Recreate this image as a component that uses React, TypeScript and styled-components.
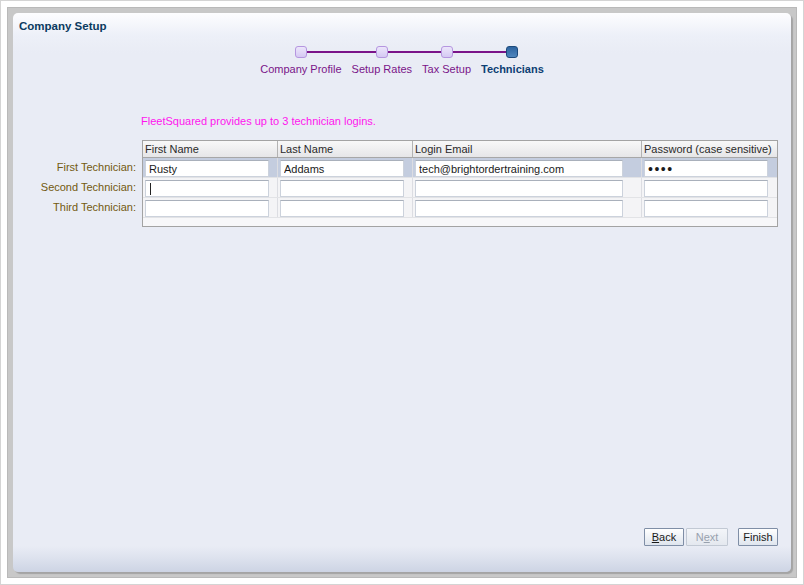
import styled, { createGlobalStyle, css } from "styled-components";

const GlobalStyle = createGlobalStyle`
  html, body {
    margin: 0;
    padding: 0;
    background: #ffffff;
  }
  body {
    font-family: "Liberation Sans", Arial, sans-serif;
    font-size: 11px;
  }
`;

const steps = [
  { label: "Company Profile", done: true },
  { label: "Setup Rates", done: true },
  { label: "Tax Setup", done: true },
  { label: "Technicians", current: true },
];

const columns = [
  { title: "First Name", width: 135, input: 124 },
  { title: "Last Name", width: 135, input: 124 },
  { title: "Login Email", width: 229, input: 208 },
  { title: "Password (case sensitive)", width: 135, input: 124 },
];

const rows = [
  { label: "First Technician:", values: ["Rusty", "Addams", "tech@brightordertraining.com", "••••"], selected: true },
  { label: "Second Technician:", values: ["", "", "", ""], caret: true },
  { label: "Third Technician:", values: ["", "", "", ""] },
];

export default function App() {
  return (
    <>
      <GlobalStyle />
      <Frame>
        <Backdrop>
          <Panel>
            <Title>Company Setup</Title>

            <Train>
              {steps.map((step, i) => (
                <Step key={step.label} first={i === 0} last={i === steps.length - 1}>
                  <Marker current={!!step.current} />
                  <StepLabel current={!!step.current}>{step.label}</StepLabel>
                </Step>
              ))}
            </Train>

            <Content>
              <Message>FleetSquared provides up to 3 technician logins.</Message>
              <FormRow>
                <Labels>
                  {rows.map((row) => (
                    <RowLabel key={row.label}>{row.label}</RowLabel>
                  ))}
                </Labels>
                <Table>
                  <HeaderRow>
                    {columns.map((col) => (
                      <HeaderCell key={col.title} style={{ width: col.width }}>
                        {col.title}
                      </HeaderCell>
                    ))}
                  </HeaderRow>
                  {rows.map((row) => (
                    <BodyRow key={row.label} selected={!!row.selected}>
                      {columns.map((col, c) => (
                        <Cell key={col.title} style={{ width: col.width }}>
                          <Field
                            style={{ width: col.input }}
                            defaultValue={row.values[c]}
                            dots={c === 3}
                            readOnly
                          />
                          {row.caret && c === 0 && <Caret />}
                        </Cell>
                      ))}
                    </BodyRow>
                  ))}
                  <TableFoot />
                </Table>
              </FormRow>
            </Content>

            <Footer>
              <ButtonGroup>
                <Button w={40}>
                  <u>B</u>ack
                </Button>
                <Button w={42} disabled>
                  N<u>e</u>xt
                </Button>
              </ButtonGroup>
              <Button w={40}>Finish</Button>
            </Footer>
          </Panel>
        </Backdrop>
      </Frame>
    </>
  );
}

const Frame = styled.div`
  width: 804px;
  height: 585px;
  box-sizing: border-box;
  border: 1px solid #d4d4d4;
  padding: 6px;
  background: #ffffff;
`;

const Backdrop = styled.div`
  height: 100%;
  box-sizing: border-box;
  border: 1px solid #b9b9b9;
  background: #c8c8c8;
  padding: 5px;
`;

const Panel = styled.div`
  height: 100%;
  box-sizing: border-box;
  display: flex;
  flex-direction: column;
  border-radius: 5px;
  background: linear-gradient(
    to bottom,
    #fdfdff 0px,
    #edf0f8 22px,
    #e9ecf5 40px,
    #e9ecf5 calc(100% - 26px),
    #dde2ee calc(100% - 14px),
    #cdd4e4 100%
  );
  box-shadow: 2px 2px 1px rgba(0, 0, 0, 0.18);
`;

const Title = styled.div`
  padding: 6px 6px 0;
  height: 18px;
  line-height: 14px;
  font-weight: bold;
  font-size: 11.5px;
  color: #0b3b60;
`;

const Train = styled.div`
  display: flex;
  justify-content: center;
  margin-top: 9px;
`;

const Step = styled.div<{ first: boolean; last: boolean }>`
  position: relative;
  display: flex;
  flex-direction: column;
  align-items: center;
  padding: 0 5px;

  &::before,
  &::after {
    content: "";
    position: absolute;
    top: 5px;
    height: 2px;
    width: 50%;
    background: #7a1489;
  }
  &::before {
    left: 0;
    display: ${(p) => (p.first ? "none" : "block")};
  }
  &::after {
    right: 0;
    display: ${(p) => (p.last ? "none" : "block")};
  }
`;

const Marker = styled.div<{ current: boolean }>`
  position: relative;
  z-index: 1;
  width: 10px;
  height: 10px;
  border-radius: 3px;
  ${(p) =>
    p.current
      ? css`
          border: 1px solid #1c4a7c;
          background: linear-gradient(to bottom, #2c64a0, #4f86be);
        `
      : css`
          border: 1px solid #b596e0;
          background: linear-gradient(to bottom, #ece6fb, #d5c9f3);
        `}
`;

const StepLabel = styled.div<{ current: boolean }>`
  margin-top: 4px;
  line-height: 14px;
  white-space: nowrap;
  color: ${(p) => (p.current ? "#0d3f73" : "#7a1489")};
  font-weight: ${(p) => (p.current ? "bold" : "normal")};
`;

const Content = styled.div`
  flex: 1;
  padding-top: 38px;
`;

const Message = styled.div`
  padding-left: 128px;
  line-height: 14px;
  color: #ff14ee;
`;

const FormRow = styled.div`
  display: flex;
  margin-top: 12px;
`;

const Labels = styled.div`
  width: 129px;
  padding-top: 17px;
  box-sizing: border-box;
`;

const RowLabel = styled.div`
  height: 20px;
  line-height: 20px;
  padding-right: 6px;
  text-align: right;
  color: #735a0f;
  white-space: nowrap;
`;

const Table = styled.div`
  border: 1px solid #a3a3a3;
  background: #f5f6f8;
`;

const HeaderRow = styled.div`
  display: flex;
  height: 16px;
  border-bottom: 1px solid #a7a7a7;
  background: linear-gradient(to bottom, #f8f8f8, #e6e6e8);
`;

const HeaderCell = styled.div`
  box-sizing: border-box;
  padding-left: 2px;
  line-height: 16px;
  color: #2a2a2a;
  border-right: 1px solid #b3b3b3;
  white-space: nowrap;

  &:last-child {
    border-right: none;
  }
`;

const BodyRow = styled.div<{ selected: boolean }>`
  display: flex;
  height: 20px;
  box-sizing: border-box;
  border-bottom: 1px solid #e2e3e6;
  background: ${(p) => (p.selected ? "#c4cddf" : "#f4f4f6")};
`;

const Cell = styled.div`
  position: relative;
  box-sizing: border-box;
  padding: 2px 0 0 2px;
  border-right: 1px solid #dcdde2;

  &:last-child {
    border-right: none;
  }
`;

const Field = styled.input<{ dots: boolean }>`
  display: block;
  box-sizing: border-box;
  height: 17px;
  margin: 0;
  padding: 0 0 0 3px;
  border: 1px solid #ccd2dc;
  border-top-color: #a9b0bb;
  background: #ffffff;
  font-family: "Liberation Sans", Arial, sans-serif;
  font-size: ${(p) => (p.dots ? "14px" : "11px")};
  letter-spacing: ${(p) => (p.dots ? "1.5px" : "0")};
  color: #1b1b1b;
  outline: none;
`;

const Caret = styled.span`
  position: absolute;
  left: 7px;
  top: 5px;
  width: 1px;
  height: 12px;
  background: #222;
`;

const TableFoot = styled.div`
  height: 8px;
  background: #f7f7f9;
`;

const Footer = styled.div`
  display: flex;
  justify-content: flex-end;
  gap: 10px;
  padding: 0 13px 26px 0;
`;

const ButtonGroup = styled.div`
  display: flex;
  gap: 2px;
`;

const Button = styled.button<{ w: number }>`
  width: ${(p) => p.w}px;
  height: 18px;
  box-sizing: border-box;
  padding: 0;
  border: 1px solid #7f8ea6;
  border-radius: 1px;
  background: linear-gradient(to bottom, #ffffff, #dfe5ee);
  font-family: "Liberation Sans", Arial, sans-serif;
  font-size: 11px;
  color: #1a1a1a;
  line-height: 16px;

  &:disabled {
    border-color: #c2c9d4;
    background: linear-gradient(to bottom, #f3f5f9, #e4e8ef);
    color: #98a1ae;
  }
`;
